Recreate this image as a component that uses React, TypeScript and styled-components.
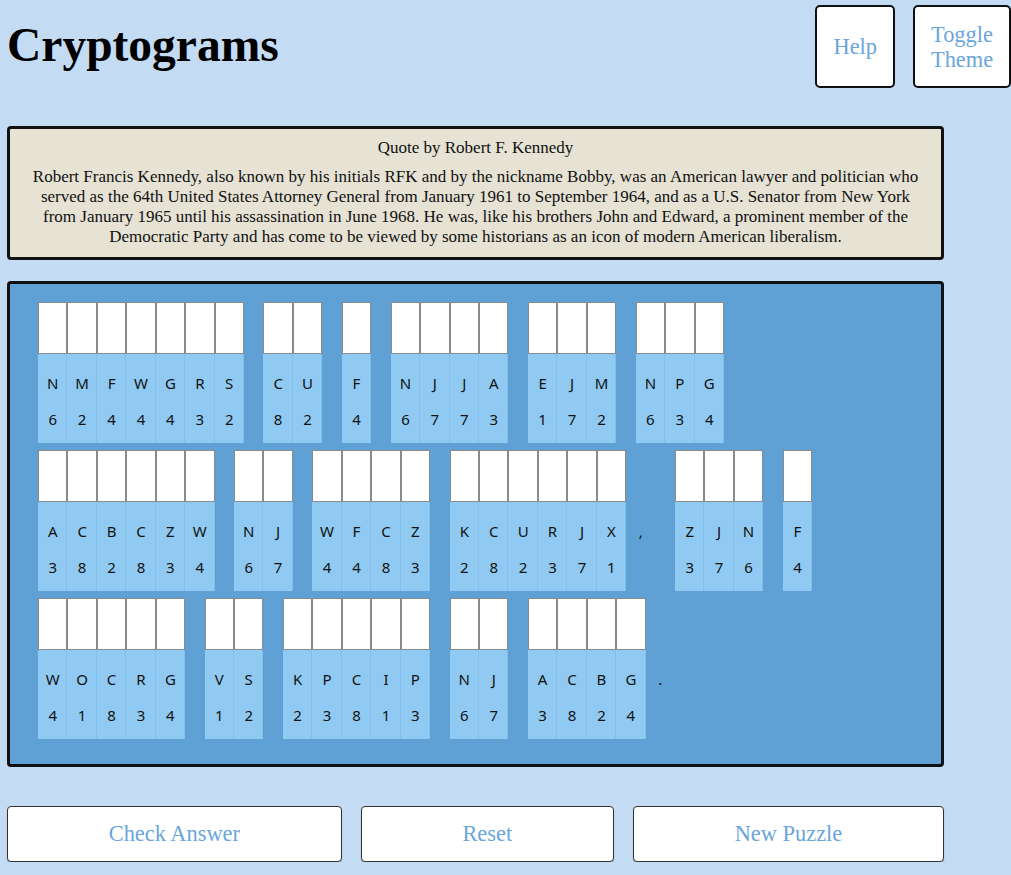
import React from "react";
import styled, { createGlobalStyle } from "styled-components";

const GlobalStyle = createGlobalStyle`
  body {
    margin: 0;
    background: #c4dbf4;
    font-family: "Liberation Serif", "Times New Roman", serif;
    overflow: hidden;
  }
`;

const Page = styled.div`
  padding-left: 7px;
`;

const Header = styled.header`
  display: flex;
  justify-content: space-between;
  align-items: flex-start;
  padding-top: 5px;
`;

const Title = styled.h1`
  margin: 16px 0 0 0;
  font-size: 47.5px;
  line-height: 48px;
  font-weight: bold;
  color: #000;
`;

const HeaderActions = styled.div`
  display: flex;
  gap: 18px;
`;

const HeaderButton = styled.button`
  height: 83px;
  max-width: 98px;
  padding: 0 16px;
  background: #fff;
  border: 2px solid #111;
  border-radius: 5px;
  font-family: "Liberation Serif", serif;
  font-size: 22.4px;
  line-height: 25px;
  color: #6aa5dc;
  cursor: pointer;
`;

const Content = styled.main`
  width: 937px;
`;

const QuoteBox = styled.section`
  margin-top: 38px;
  padding: 9px 15px 10px;
  background: #e6e2d4;
  border: 3px solid #111;
  border-radius: 4px;
  text-align: center;
  font-size: 17px;
  line-height: 20px;
  color: #111;
`;

const QuoteTitle = styled.div`
  margin-bottom: 9px;
`;

const QuoteText = styled.p`
  margin: 0;
`;

const Puzzle = styled.section`
  margin-top: 21px;
  display: flex;
  flex-wrap: wrap;
  align-content: flex-start;
  column-gap: 19.5px;
  row-gap: 7px;
  padding: 18px 28px 25px 28px;
  background: #5fa1d5;
  border: 3px solid #111;
  border-radius: 4px;
`;

const Word = styled.div`
  display: flex;
`;

const Cell = styled.div<{ $punct?: boolean }>`
  width: 29.43px;
  display: flex;
  flex-direction: column;
  background: ${(p) => (p.$punct ? "transparent" : "#90caf2")};
  box-shadow: ${(p) => (p.$punct ? "none" : "inset -1px 0 0 #84bfe9")};
  font-family: "Noto Sans", "Open Sans", sans-serif;
  font-size: 15px;
  color: #111;
`;

const LetterInput = styled.input<{ $hidden?: boolean }>`
  box-sizing: border-box;
  width: 100%;
  height: 52px;
  margin: 0;
  padding: 0;
  border: 1px solid #8a8a8a;
  background: #fff;
  visibility: ${(p) => (p.$hidden ? "hidden" : "visible")};
`;

const Cipher = styled.div`
  height: 20px;
  line-height: 20px;
  margin-top: 19px;
  text-align: center;
`;

const Count = styled.div`
  height: 20px;
  line-height: 20px;
  margin: 16px 0 14px;
  text-align: center;
`;

const Actions = styled.div`
  display: flex;
  gap: 19px;
  margin-top: 39px;
`;

const ActionButton = styled.button`
  flex: 1 1 auto;
  height: 56px;
  background: #fff;
  border: 1px solid #333;
  border-radius: 4px;
  box-shadow: 0 1px 1px rgba(0, 0, 0, 0.25);
  font-family: "Liberation Serif", serif;
  font-size: 22.4px;
  color: #6aa5dc;
  cursor: pointer;
`;

const counts: Record<string, number> = {
  N: 6, M: 2, F: 4, W: 4, G: 4, R: 3, S: 2, C: 8, U: 2, J: 7,
  A: 3, E: 1, P: 3, B: 2, Z: 3, K: 2, X: 1, O: 1, V: 1, I: 1,
};

const words = [
  "NMFWGRS", "CU", "F", "NJJA", "EJM", "NPG",
  "ACBCZW", "NJ", "WFCZ", "KCURJX,", "ZJN", "F",
  "WOCRG", "VS", "KPCIP", "NJ", "ACBG.",
];

const App = () => {
	return (
		<Page>
			<GlobalStyle />
			<Header>
				<Title>Cryptograms</Title>
				<HeaderActions>
					<HeaderButton>Help</HeaderButton>
					<HeaderButton>Toggle Theme</HeaderButton>
				</HeaderActions>
			</Header>
			<Content>
				<QuoteBox>
					<QuoteTitle>Quote by Robert F. Kennedy</QuoteTitle>
					<QuoteText>
						Robert Francis Kennedy, also known by his initials RFK and by the
						nickname Bobby, was an American lawyer and politician who served as
						the 64th United States Attorney General from January 1961 to
						September 1964, and as a U.S. Senator from New York from January
						1965 until his assassination in June 1968. He was, like his brothers
						John and Edward, a prominent member of the Democratic Party and has
						come to be viewed by some historians as an icon of modern American
						liberalism.
					</QuoteText>
				</QuoteBox>
				<Puzzle>
					{words.map((word, wi) => (
						<Word key={wi}>
							{word.split("").map((ch, ci) => {
								const punct = !(ch in counts);
								return (
									<Cell key={ci} $punct={punct}>
										<LetterInput $hidden={punct} maxLength={1} />
										<Cipher>{ch}</Cipher>
										<Count>{punct ? "" : counts[ch]}</Count>
									</Cell>
								);
							})}
						</Word>
					))}
				</Puzzle>
				<Actions>
					<ActionButton>Check Answer</ActionButton>
					<ActionButton>Reset</ActionButton>
					<ActionButton>New Puzzle</ActionButton>
				</Actions>
			</Content>
		</Page>
	);
};

export default App;
